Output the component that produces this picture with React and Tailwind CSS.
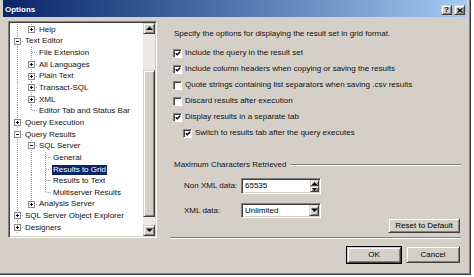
import React from 'react';

const FONT = "font-['Liberation_Sans',Arial,sans-serif]";
const RAISED =
  'border border-t-[#d4d0c8] border-l-[#d4d0c8] border-r-[#404040] border-b-[#404040] shadow-[inset_1px_1px_#fff,inset_-1px_-1px_#808080] bg-[#d4d0c8]';
const SUNKEN =
  'border border-t-[#808080] border-l-[#808080] border-r-white border-b-white shadow-[inset_1px_1px_#404040,inset_-1px_-1px_#d4d0c8]';

// tree rows; cells: v = vertical line, t = tee, l = last child corner
const tree = [
  { label: 'Help', cells: ['v', 'l'], box: '+' },
  { label: 'Text Editor', cells: ['t'], box: '-' },
  { label: 'File Extension', cells: ['v', 't'] },
  { label: 'All Languages', cells: ['v', 't'], box: '+' },
  { label: 'Plain Text', cells: ['v', 't'], box: '+' },
  { label: 'Transact-SQL', cells: ['v', 't'], box: '+' },
  { label: 'XML', cells: ['v', 't'], box: '+' },
  { label: 'Editor Tab and Status Bar', cells: ['v', 'l'] },
  { label: 'Query Execution', cells: ['t'], box: '+' },
  { label: 'Query Results', cells: ['t'], box: '-' },
  { label: 'SQL Server', cells: ['v', 't'], box: '-' },
  { label: 'General', cells: ['v', 'v', 't'] },
  { label: 'Results to Grid', cells: ['v', 'v', 't'], selected: true },
  { label: 'Results to Text', cells: ['v', 'v', 't'] },
  { label: 'Multiserver Results', cells: ['v', 'v', 'l'] },
  { label: 'Analysis Server', cells: ['v', 'l'], box: '+' },
  { label: 'SQL Server Object Explorer', cells: ['t'], box: '+' },
  { label: 'Designers', cells: ['t'], box: '+' },
];

const options = [
  { label: 'Include the query in the result set', checked: true },
  { label: 'Include column headers when copying or saving the results', checked: true },
  { label: 'Quote strings containing list separators when saving .csv results', checked: false },
  { label: 'Discard results after execution', checked: false },
  { label: 'Display results in a separate tab', checked: true },
  { label: 'Switch to results tab after the query executes', checked: true, indent: true },
];

function TreeCell({ type, box }) {
  const dots = { stroke: '#9a9a9a', strokeDasharray: '1 1' };
  return (
    <svg width="14" height="11.65" viewBox="0 0 14 11.65" className="shrink-0 overflow-visible">
      <line x1="7.5" y1="0" x2="7.5" y2={type === 'l' ? 5.5 : 11.65} {...dots} />
      {(type === 't' || type === 'l') && <line x1="8" y1="5.5" x2="14" y2="5.5" {...dots} />}
      {box && (
        <g>
          <rect x="4.5" y="2.5" width="6" height="6" fill="#fff" stroke="#8a8a8a" />
          <line x1="6" y1="5.5" x2="9" y2="5.5" stroke="#000" />
          {box === '+' && <line x1="7.5" y1="4" x2="7.5" y2="7" stroke="#000" />}
        </g>
      )}
    </svg>
  );
}

function Arrow({ dir }) {
  const pts = dir === 'up' ? '0,4 3.5,0.5 7,4' : '0,0.5 3.5,4 7,0.5';
  return (
    <svg width="7" height="4.5" viewBox="0 0 7 4.5">
      <polygon points={pts} fill="#000" />
    </svg>
  );
}

function TreePanel() {
  return (
    <div className={`w-[149px] h-[217px] flex bg-white ${SUNKEN} p-[1px]`}>
      <div className="flex-1 overflow-hidden pt-[1px]">
        {tree.map((row) => (
          <div key={row.label} className="flex items-center h-[11.65px]">
            {row.cells.map((c, i) => (
              <TreeCell key={i} type={c} box={i === row.cells.length - 1 ? row.box : null} />
            ))}
            <span
              className={`px-[1px] leading-[10px] whitespace-nowrap ${
                row.selected ? 'bg-[#0a246a] text-white' : 'text-[#111]'
              }`}
            >
              {row.label}
            </span>
          </div>
        ))}
      </div>
      <div className="w-[12px] flex flex-col bg-[#ebe9e5]">
        <div className={`h-[11px] flex items-center justify-center ${RAISED}`}>
          <Arrow dir="up" />
        </div>
        <div className="h-[36px]" />
        <div className={`h-[147px] ${RAISED}`} />
        <div className="flex-1" />
        <div className={`h-[11px] flex items-center justify-center ${RAISED}`}>
          <Arrow dir="down" />
        </div>
      </div>
    </div>
  );
}

function CheckBox({ checked }) {
  return (
    <span className="w-[9px] h-[9px] shrink-0 bg-white flex items-center justify-center border border-t-[#808080] border-l-[#808080] border-r-white border-b-white shadow-[inset_1px_1px_#404040]">
      {checked && (
        <svg width="6" height="5" viewBox="0 0 7 6">
          <polyline points="0.8,2.6 2.6,4.4 6.2,0.8" fill="none" stroke="#000" strokeWidth="1.7" />
        </svg>
      )}
    </span>
  );
}

function Button({ children, className = '', isDefault = false }) {
  const inner = (
    <span className={`flex items-center justify-center h-full w-full text-black ${RAISED}`}>{children}</span>
  );
  if (isDefault) return <span className={`border border-black flex ${className}`}>{inner}</span>;
  return <span className={`flex ${className}`}>{inner}</span>;
}

function RightPanel() {
  return (
    <div className="ml-[15px] w-[290px] h-[218px] flex flex-col text-[#111]">
      <div className="mt-[8px] pl-[2px] leading-[10px] whitespace-nowrap">
        Specify the options for displaying the result set in grid format.
      </div>
      <div className="mt-[6px] flex flex-col">
        {options.map((o) => (
          <div key={o.label} className={`flex items-center h-[16px] ${o.indent ? 'pl-[11px]' : 'pl-[1px]'}`}>
            <CheckBox checked={o.checked} />
            <span className="ml-[3px] leading-[10px] whitespace-nowrap">{o.label}</span>
          </div>
        ))}
      </div>
      <div className="mt-[19px] h-[10px] flex items-center pl-[2px]">
        <span className="leading-[10px] whitespace-nowrap">Maximum Characters Retrieved</span>
        <span className="ml-[4px] mr-[1px] flex-1 border-t border-t-[#808080] border-b border-b-white" />
      </div>
      <div className="mt-[8px] h-[16px] flex items-center pl-[12px]">
        <span className="w-[57px] leading-[10px] whitespace-nowrap">Non XML data:</span>
        <div className={`w-[80px] h-[16px] bg-white flex items-stretch ${SUNKEN} p-[1px]`}>
          <span className="flex-1 pl-[2px] leading-[12px] text-black">65535</span>
          <div className="w-[9px] flex flex-col">
            <div className={`flex-1 flex items-center justify-center ${RAISED}`}>
              <svg width="5" height="3" viewBox="0 0 5 3">
                <polygon points="0,3 2.5,0 5,3" fill="#000" />
              </svg>
            </div>
            <div className={`flex-1 flex items-center justify-center ${RAISED}`}>
              <svg width="5" height="3" viewBox="0 0 5 3">
                <polygon points="0,0 2.5,3 5,0" fill="#000" />
              </svg>
            </div>
          </div>
        </div>
      </div>
      <div className="mt-[9px] h-[15px] flex items-center pl-[12px]">
        <span className="w-[57px] leading-[10px] whitespace-nowrap">XML data:</span>
        <div className={`w-[80px] h-[15px] bg-white flex items-stretch ${SUNKEN} p-[1px]`}>
          <span className="flex-1 pl-[2px] leading-[11px] text-black">Unlimited</span>
          <div className={`w-[10px] flex items-center justify-center ${RAISED}`}>
            <Arrow dir="down" />
          </div>
        </div>
      </div>
      <div className="flex justify-end pr-[2px]">
        <Button className="w-[72px] h-[15px]">Reset to Default</Button>
      </div>
      <div className="mt-[4px] -ml-[2px] mr-[1px] border-t border-t-[#808080] border-b border-b-white" />
    </div>
  );
}

export default function App() {
  return (
    <div className={`w-[474px] h-[277px] bg-white text-[8px] text-black ${FONT}`}>
      <div className="w-[471px] h-[275px] bg-[#d4d0c8] flex flex-col border-r border-b border-r-[#404040] border-b-[#404040] shadow-[inset_-1px_-1px_#808080]">
        <div className="mx-[3px] h-[17px] pt-[3px] flex items-center bg-gradient-to-r from-[#0a246a] to-[#a6caf0]">
          <span className="ml-[2px] font-bold text-white leading-[10px]">Options</span>
          <div className="ml-auto mr-[2px] flex gap-[2px]">
            <span className={`w-[11px] h-[10px] flex items-center justify-center font-bold leading-[8px] ${RAISED}`}>
              ?
            </span>
            <span className={`w-[11px] h-[10px] flex items-center justify-center ${RAISED}`}>
              <svg width="6" height="5" viewBox="0 0 6 5">
                <path d="M0.5 0.5 L5.5 4.5 M5.5 0.5 L0.5 4.5" stroke="#000" strokeWidth="1.3" />
              </svg>
            </span>
          </div>
        </div>
        <div className="mt-[4px] pl-[8px] flex">
          <TreePanel />
          <RightPanel />
        </div>
        <div className="mt-[7px] pr-[10px] flex justify-end gap-[4px]">
          <Button isDefault className="w-[56px] h-[18px]">
            OK
          </Button>
          <Button className="w-[54px] h-[17px]">Cancel</Button>
        </div>
      </div>
    </div>
  );
}
